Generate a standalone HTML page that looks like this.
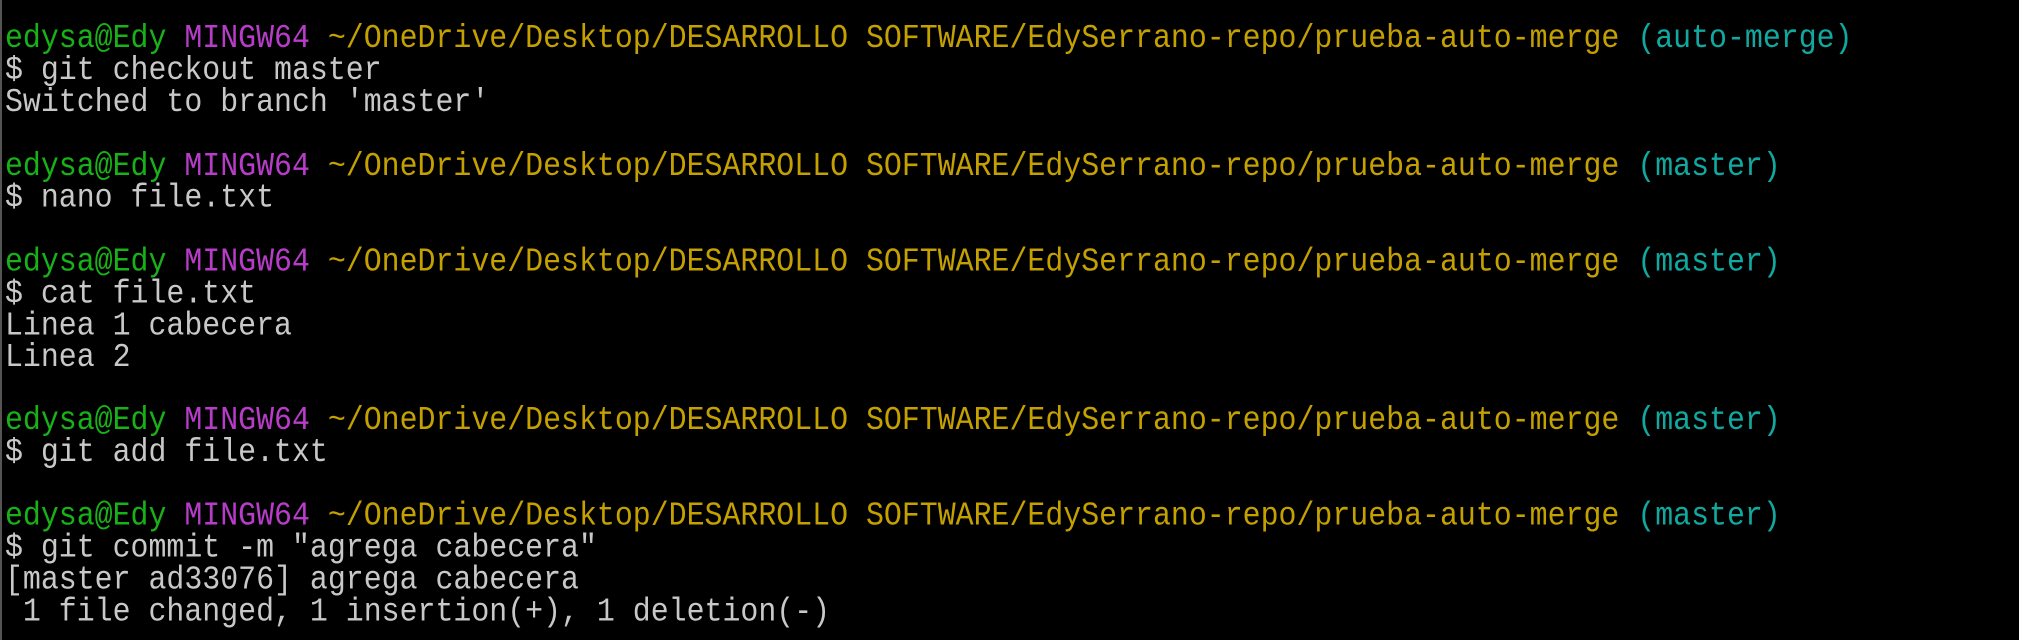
<!DOCTYPE html>
<html><head><meta charset="utf-8"><style>
html,body{margin:0;padding:0;background:#000;width:2019px;height:640px;overflow:hidden}
body{position:relative}
.edge{position:absolute;left:0;top:0;width:2px;height:640px;background:#555}
pre{margin:0;position:absolute;left:5px;top:23px;font-family:"Liberation Mono",monospace;font-size:29.9px;line-height:28.95px;color:#c8c8c8;white-space:pre;transform:scaleY(1.1);transform-origin:0 0}
.g{color:#18b218}.m{color:#b73cc8}.y{color:#c4a000}.c{color:#11a8a0}
</style></head><body><div class="edge"></div>
<pre><span class="g">edysa@Edy</span> <span class="m">MINGW64</span> <span class="y">~/OneDrive/Desktop/DESARROLLO SOFTWARE/EdySerrano-repo/prueba-auto-merge</span> <span class="c">(auto-merge)</span>
$ git checkout master
Switched to branch 'master'

<span class="g">edysa@Edy</span> <span class="m">MINGW64</span> <span class="y">~/OneDrive/Desktop/DESARROLLO SOFTWARE/EdySerrano-repo/prueba-auto-merge</span> <span class="c">(master)</span>
$ nano file.txt

<span class="g">edysa@Edy</span> <span class="m">MINGW64</span> <span class="y">~/OneDrive/Desktop/DESARROLLO SOFTWARE/EdySerrano-repo/prueba-auto-merge</span> <span class="c">(master)</span>
$ cat file.txt
Linea 1 cabecera
Linea 2

<span class="g">edysa@Edy</span> <span class="m">MINGW64</span> <span class="y">~/OneDrive/Desktop/DESARROLLO SOFTWARE/EdySerrano-repo/prueba-auto-merge</span> <span class="c">(master)</span>
$ git add file.txt

<span class="g">edysa@Edy</span> <span class="m">MINGW64</span> <span class="y">~/OneDrive/Desktop/DESARROLLO SOFTWARE/EdySerrano-repo/prueba-auto-merge</span> <span class="c">(master)</span>
$ git commit -m "agrega cabecera"
[master ad33076] agrega cabecera
 1 file changed, 1 insertion(+), 1 deletion(-)</pre>
</body></html>
